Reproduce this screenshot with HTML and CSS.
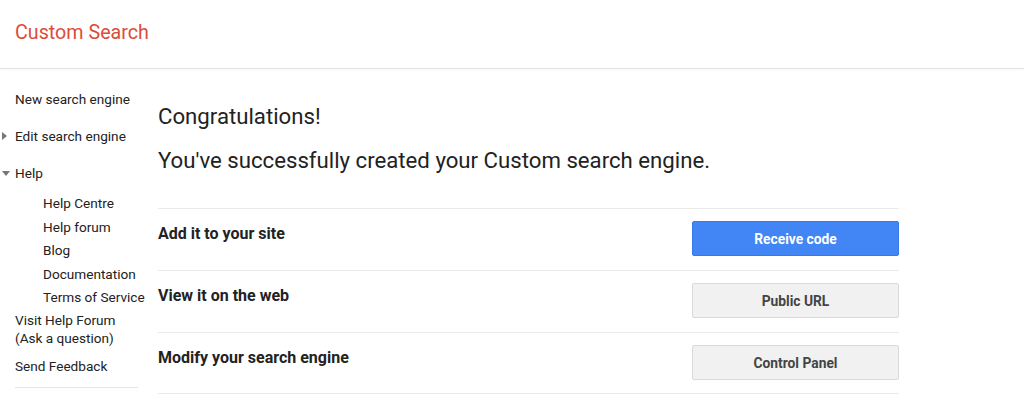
FILE: index.html
```html
<!DOCTYPE html>
<html lang="en">
<head>
<meta charset="utf-8">
<title>Custom Search</title>
<link rel="stylesheet" href="styles.css">
</head>
<body>
<header class="topbar">
  <div class="brand">Custom Search</div>
</header>
<div class="layout">
  <nav class="sidebar">
    <div class="nav-item">New search engine</div>
    <div class="nav-item collapsed">Edit search engine</div>
    <div class="nav-item expanded">Help</div>
    <div class="sub-list">
      <div class="sub-item">Help Centre</div>
      <div class="sub-item">Help forum</div>
      <div class="sub-item">Blog</div>
      <div class="sub-item">Documentation</div>
      <div class="sub-item">Terms of Service</div>
    </div>
    <div class="visit">Visit Help Forum<br>(Ask a question)</div>
    <div class="feedback">Send Feedback</div>
  </nav>
  <main class="content">
    <h1 class="congrats">Congratulations!</h1>
    <p class="subtitle">You've successfully created your Custom search engine.</p>
    <div class="rows">
      <div class="row">
        <div class="row-label">Add it to your site</div>
        <button class="btn btn-primary">Receive code</button>
      </div>
      <div class="row">
        <div class="row-label">View it on the web</div>
        <button class="btn">Public URL</button>
      </div>
      <div class="row">
        <div class="row-label">Modify your search engine</div>
        <button class="btn">Control Panel</button>
      </div>
    </div>
  </main>
</div>
</body>
</html>
```
FILE: styles.css
```css
html, body {
  margin: 0;
  padding: 0;
  background: #fff;
  font-family: Roboto, "Liberation Sans", Arial, sans-serif;
  color: #222;
}

.topbar {
  height: 68px;
  border-bottom: 1px solid #e2e2e2;
  box-shadow: 0 1px 3px rgba(0,0,0,0.04);
  display: flex;
  align-items: center;
  padding-left: 15px;
}

.brand {
  font-size: 19.7px;
  color: #dd4b39;
  line-height: 24px;
  margin-top: -3px;
}

.layout {
  display: flex;
}

.sidebar {
  width: 123px;
  margin-left: 15px;
  margin-right: 20px;
  padding-top: 12px;
  font-size: 13.6px;
  color: #222;
}

.nav-item {
  line-height: 37px;
  height: 37px;
  white-space: nowrap;
}

.nav-item.collapsed::before,
.nav-item.expanded::before {
  content: "";
  display: inline-block;
  width: 0;
  height: 0;
  margin-left: -13px;
  margin-right: 8px;
  vertical-align: middle;
}

.nav-item.collapsed::before {
  border-top: 4px solid transparent;
  border-bottom: 4px solid transparent;
  border-left: 5px solid #777;
  margin-top: -2px;
}

.nav-item.expanded::before {
  border-left: 4px solid transparent;
  border-right: 4px solid transparent;
  border-top: 5px solid #777;
  margin-right: 5px;
  margin-top: -2px;
}

.sub-list {
  padding-left: 28px;
}

.sub-item {
  line-height: 23.5px;
  height: 23.5px;
  white-space: nowrap;
}

.visit {
  line-height: 18px;
  margin-top: 1px;
  white-space: nowrap;
}

.feedback {
  line-height: 18px;
  margin-top: 10px;
  padding-bottom: 12px;
  border-bottom: 1px solid #e5e5e5;
}

.content {
  width: 741px;
  padding-top: 35px;
}

.congrats {
  margin: 0;
  font-size: 22.2px;
  font-weight: 400;
  line-height: 24px;
  color: #222;
}

.subtitle {
  margin: 20px 0 36px;
  font-size: 22.2px;
  line-height: 24px;
  color: #222;
}

.row {
  display: flex;
  justify-content: space-between;
  align-items: flex-start;
  border-top: 1px solid #ebebeb;
  padding: 12px 0 14px;
}

.row:last-child {
  border-bottom: 1px solid #ebebeb;
  padding-bottom: 13px;
}

.row-label {
  font-size: 16px;
  font-weight: 700;
  line-height: 20px;
  padding-top: 3px;
  color: #222;
}

.btn {
  width: 207px;
  height: 35px;
  border: 1px solid #d9d9d9;
  border-radius: 2px;
  background: #f1f1f1;
  color: #444;
  font-family: Roboto, "Liberation Sans", Arial, sans-serif;
  font-size: 13.8px;
  font-weight: 700;
  padding: 0;
}

.btn-primary {
  background: #4285f4;
  border-color: #3b78e7;
  color: #fff;
}
```
